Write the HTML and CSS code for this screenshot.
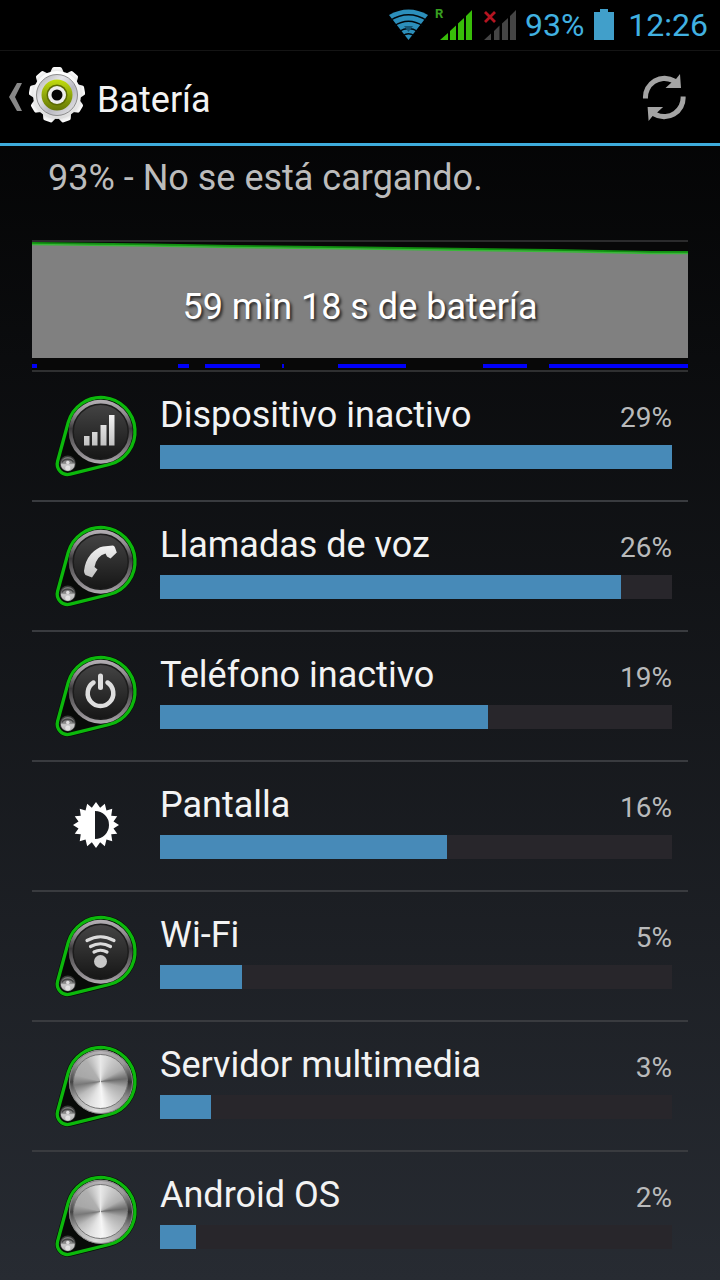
FILE: index.html
```html
<!DOCTYPE html>
<html lang="es">
<head>
<meta charset="utf-8">
<meta name="viewport" content="width=device-width, initial-scale=1">
<title>Batería</title>
<link rel="stylesheet" href="styles.css">
</head>
<body>
<svg class="defs" aria-hidden="true">
  <defs>
    <linearGradient id="ring" x1="0" y1="0" x2="0" y2="1">
      <stop offset="0" stop-color="#b4b0b4"/><stop offset=".22" stop-color="#918e91"/><stop offset=".45" stop-color="#3c3a3c"/><stop offset=".58" stop-color="#585658"/><stop offset=".85" stop-color="#8c888c"/><stop offset="1" stop-color="#b0acb0"/>
    </linearGradient>
    <linearGradient id="face" x1="0" y1="0" x2="0" y2="1">
      <stop offset="0" stop-color="#444"/><stop offset="1" stop-color="#161616"/>
    </linearGradient>
    <linearGradient id="glyph" x1="0" y1="0" x2="0" y2="1">
      <stop offset="0" stop-color="#f2f2f2"/><stop offset="1" stop-color="#c2c2c2"/>
    </linearGradient>
    <linearGradient id="screw" x1="0" y1="0" x2="0" y2="1">
      <stop offset="0" stop-color="#777"/><stop offset=".45" stop-color="#8a8a8a"/><stop offset=".55" stop-color="#ccc"/><stop offset="1" stop-color="#aaa"/>
    </linearGradient>
    <g id="knob">
      <path d="M28.2 37.5A34 34 0 1 1 69.2 79.5L30.2 89.2A10.5 10.5 0 0 1 17.6 76.2Z" fill="#080a08" stroke="#041004" stroke-width="4.500"/>
      <path d="M28.2 37.5A34 34 0 1 1 69.2 79.5L30.2 89.2A10.5 10.5 0 0 1 17.6 76.2Z" fill="#080a08" stroke="#0cb80c" stroke-width="3.300"/>
      <circle cx="60.7" cy="46.7" r="32" fill="url(#ring)"/>
      <circle cx="27.8" cy="78.4" r="8" fill="#3a3a3a"/>
      <circle cx="27.8" cy="79" r="7" fill="url(#screw)"/>
      <path d="M22 77.5a6 4.5 0 0 1 11.500 0" fill="none" stroke="#444" stroke-width="1.500"/>
      <circle cx="27.8" cy="77.5" r="1.800" fill="#ddd"/>
      <circle cx="27.8" cy="83" r="2.600" fill="#f4f4f4" opacity=".7"/>
    </g>
    <g id="dark-knob">
      <use href="#knob"/>
      <circle cx="60.7" cy="46.7" r="27.500" fill="url(#face)" stroke="#1c1c1c" stroke-width="1.500"/>
    </g>
    <linearGradient id="gear" x1="0" y1="0" x2="0" y2="1">
      <stop offset="0" stop-color="#fff"/><stop offset="1" stop-color="#dcdcdc"/>
    </linearGradient>
    <linearGradient id="silver" x1="0" y1="0" x2="1" y2="1">
      <stop offset="0" stop-color="#aaa"/><stop offset=".35" stop-color="#e6e6ea"/><stop offset=".6" stop-color="#b8b8c0"/><stop offset="1" stop-color="#eee"/>
    </linearGradient>
    <linearGradient id="lime" x1="0" y1="0" x2="0" y2="1">
      <stop offset="0" stop-color="#c3de10"/><stop offset=".5" stop-color="#90a80a"/><stop offset="1" stop-color="#657606"/>
    </linearGradient>
    <path id="tooth" d="M-7 -22L-5 -26.500Q-4.500 -28 -3 -28H3Q4.500 -28 5 -26.500L7 -22Z"/>
  </defs>
</svg>

<div class="status-bar">
  <svg class="status-wifi" viewBox="8 8 42 34" aria-label="Wi-Fi">
    <path d="M9 15Q28.500 4 48 15L28.500 40Z" fill="#2c8fbb"/>
    <path d="M10 20.500Q28.500 9 47 20.500M14 26Q28.500 16.500 43 26M19 31.500Q28.500 25.500 38 31.500M23 35.500Q28.500 32 34 35.500" fill="none" stroke="#00060a" stroke-width="1.300"/>
    <path d="M24 26h9l-4.500 6z" fill="#165574"/>
  </svg>
  <svg class="status-signal" viewBox="54 4 39 42" aria-label="Señal móvil, itinerancia">
    <text class="roaming" x="55" y="18">R</text>
    <path d="M60 40L68 33V40ZM70 31L76 25.500V40H70ZM78 23.500L84 18V40H78ZM86 16L92 10V40H86Z" fill="#38bd09"/>
  </svg>
  <svg class="status-nosignal" viewBox="104 8 32 34" aria-label="Sin señal">
    <path d="M104 40L111 33.500V40ZM114 31L119.500 25.500V40H114ZM122 23.500L128 18V40H122ZM130 16L136 10V40H130Z" fill="#454545"/>
    <path d="M105 12L115 22M115 12L105 22" stroke="#b51420" stroke-width="2.800"/>
  </svg>
  <span class="status-level">93%</span>
  <svg class="status-battery" viewBox="0 0 20 34" aria-label="Batería">
    <path d="M0 4H6V1H14V4H20V32H0Z" fill="#419fca"/>
  </svg>
  <span>12:26</span>
</div>

<header class="action-bar">
  <a class="up" href="#">
    <svg class="chevron" viewBox="0 0 14 30" aria-hidden="true"><path d="M9 1H14L7 15L14 29H9L1 15Z" fill="#888"/></svg>
    <svg class="gear" viewBox="-28 -28 56 56" aria-hidden="true">
      <g fill="url(#gear)">
        <use href="#tooth"/><use href="#tooth" transform="rotate(40)"/><use href="#tooth" transform="rotate(80)"/><use href="#tooth" transform="rotate(120)"/><use href="#tooth" transform="rotate(160)"/><use href="#tooth" transform="rotate(200)"/><use href="#tooth" transform="rotate(240)"/><use href="#tooth" transform="rotate(280)"/><use href="#tooth" transform="rotate(320)"/>
        <circle r="24"/>
      </g>
      <circle r="20.500" fill="url(#silver)" stroke="#777" stroke-width=".8"/>
      <circle r="15.500" fill="url(#lime)"/>
      <circle r="10.500" fill="#5c6c04"/>
      <circle r="9" fill="#eee"/>
      <circle r="5.500" fill="#050505"/>
    </svg>
    <h1>Batería</h1>
  </a>
  <button class="refresh" type="button" aria-label="Actualizar">
    <svg viewBox="22 14 45 49">
      <g fill="#a4a4a4">
        <path id="arrow" d="M23 39.500A21.500 21.500 0 0 1 56 20L60 15L61 29L45.500 29L51.500 23.500A16.500 16.500 0 0 0 28 39.500Z"/>
        <use href="#arrow" transform="rotate(180 44.300 38.500)"/>
      </g>
    </svg>
  </button>
</header>

<main>
  <p class="summary">93% - No se está cargando.</p>

  <section class="chart">
    <div class="graph">
      <svg class="curve" viewBox="0 0 656 116" preserveAspectRatio="none" aria-hidden="true">
        <path d="M0 2L120 3.500L330 6.500L520 8.500L656 11V116H0Z" fill="#808080"/>
        <path d="M0 1L120 2.500L200 4L330 5.500L520 8L620 10H656" fill="none" stroke="#109010" stroke-width="2"/>
        <path d="M0 2.500L120 4L200 5.500L330 7L520 9.500L620 11.500H656" fill="none" stroke="#39b739" stroke-width="1.500"/>
      </svg>
      <p class="duration">59 min 18 s de batería</p>
    </div>
    <svg class="activity" viewBox="0 0 656 12" preserveAspectRatio="none" aria-hidden="true">
      <path d="M0 8H5M146 8H157M173 8H228M250 8H252M306 8H374M451 8H495M517 8H656" stroke="#0000f8" stroke-width="4"/>
    </svg>
  </section>

  <ul class="usage">
    <li><a href="#">
      <svg class="icon" viewBox="8 3 96 96" aria-hidden="true">
        <use href="#dark-knob"/>
        <path d="M44 51H49.500V60.500H44ZM52 47H57.500V60.500H52ZM60.500 40H66.500V60.500H60.500ZM69 30H74.500V60.500H69Z" fill="url(#glyph)"/>
      </svg>
      <span class="name">Dispositivo inactivo</span><span class="percent">29%</span>
      <span class="bar"><span class="fill" style="width:100%"></span></span>
    </a></li>
    <li><a href="#">
      <svg class="icon" viewBox="8 3 96 96" aria-hidden="true">
        <use href="#dark-knob"/>
        <path d="M63 31.500L73 30.500Q74.500 31 75 32.500L76.800 37.500L70.500 43.500L67 41.500L65.500 38.500Q56.500 41 54.500 52L57.500 54.500L52 62.500L45.500 60Q44 58.500 44 56Q45 46 51 39Q57 32.500 63 31.500Z" fill="url(#glyph)"/>
      </svg>
      <span class="name">Llamadas de voz</span><span class="percent">26%</span>
      <span class="bar"><span class="fill" style="width:90%"></span></span>
    </a></li>
    <li><a href="#">
      <svg class="icon" viewBox="8 3 96 96" aria-hidden="true">
        <use href="#dark-knob"/>
        <g fill="none" stroke="#dedede" stroke-width="4.500" stroke-linecap="round">
          <path d="M53.500 37.500A12.800 12.800 0 1 0 67.500 37.500"/>
          <path d="M60.500 31V42.500" stroke-width="5"/>
        </g>
      </svg>
      <span class="name">Teléfono inactivo</span><span class="percent">19%</span>
      <span class="bar"><span class="fill" style="width:64%"></span></span>
    </a></li>
    <li><a href="#">
      <svg class="icon" viewBox="-48 -47 96 96" aria-hidden="true">
        <path d="M0 -23L4.170 -17.300L8.800 -21.250L10.460 -14.400L16.260 -16.260L15.240 -9.300L21.250 -8.800L17.500 -3.480L23 0L17.500 3.480L21.250 8.800L15.240 9.300L16.260 16.260L10.460 14.400L8.800 21.250L4.170 17.300L0 23L-4.170 17.300L-8.800 21.250L-10.460 14.400L-16.260 16.260L-15.240 9.300L-21.250 8.800L-17.500 3.480L-23 0L-17.500 -3.480L-21.250 -8.800L-15.240 -9.300L-16.260 -16.260L-10.460 -14.400L-8.800 -21.250L-4.170 -17.300ZM-1 -14V14A14 14 0 0 0 -1 -14Z" fill="#fff" fill-rule="evenodd"/>
      </svg>
      <span class="name">Pantalla</span><span class="percent">16%</span>
      <span class="bar"><span class="fill" style="width:56%"></span></span>
    </a></li>
    <li><a href="#">
      <svg class="icon" viewBox="8 3 96 96" aria-hidden="true">
        <use href="#dark-knob"/>
        <path d="M47 35.500Q60.500 28 74 35.500M50.500 41.500Q60.500 36 70.500 41.500M54 47Q60.500 43.500 67 47" fill="none" stroke="#dcdcdc" stroke-width="3.200" stroke-linecap="round"/>
        <circle cx="60.500" cy="56.500" r="6.500" fill="#c8c8c8"/>
      </svg>
      <span class="name">Wi-Fi</span><span class="percent">5%</span>
      <span class="bar"><span class="fill" style="width:16%"></span></span>
    </a></li>
    <li><a href="#">
      <svg class="icon" viewBox="8 3 96 96" aria-hidden="true">
        <use href="#knob"/>
        <foreignObject x="28.700" y="14.700" width="64" height="64"><div class="brushed outer"></div></foreignObject>
        <foreignObject x="33.200" y="19.200" width="55" height="55"><div class="brushed"></div></foreignObject>
      </svg>
      <span class="name">Servidor multimedia</span><span class="percent">3%</span>
      <span class="bar"><span class="fill" style="width:10%"></span></span>
    </a></li>
    <li><a href="#">
      <svg class="icon" viewBox="8 3 96 96" aria-hidden="true">
        <use href="#knob"/>
        <foreignObject x="28.700" y="14.700" width="64" height="64"><div class="brushed outer"></div></foreignObject>
        <foreignObject x="33.200" y="19.200" width="55" height="55"><div class="brushed"></div></foreignObject>
      </svg>
      <span class="name">Android OS</span><span class="percent">2%</span>
      <span class="bar"><span class="fill" style="width:7%"></span></span>
    </a></li>
  </ul>
</main>
</body>
</html>
```
FILE: styles.css
```css
* { box-sizing: border-box; }

body {
  margin: 0;
  min-height: 100vh;
  background: linear-gradient(#000, #272b32);
  color: #f3f3f3;
  font-family: Roboto, "Noto Sans", sans-serif;
  font-size: 36px;
  line-height: 42px;
}

p, h1, ul { margin: 0; padding: 0; }
a { color: inherit; text-decoration: none; }
svg { display: block; flex: none; }
.defs { position: absolute; width: 0; height: 0; }

.status-bar {
  display: flex;
  align-items: center;
  justify-content: flex-end;
  height: 50px;
  padding-right: 12px;
  background: #000;
  color: #41b1e1;
  font-size: 32px;
}
.status-wifi { width: 42px; height: 34px; margin-right: 4px; }
.status-signal { width: 39px; height: 42px; margin-right: 11px; }
.status-nosignal { width: 32px; height: 34px; margin-right: 9px; }
.status-battery { width: 20px; height: 34px; margin: 0 14px 0 10px; }
.roaming { fill: #38a020; font-size: 13px; font-weight: 700; }

.action-bar {
  display: flex;
  align-items: center;
  justify-content: space-between;
  height: 96px;
  padding: 0 32px 0 8px;
  background: #000;
  border-top: 1px solid #141414;
  border-bottom: 3px solid #3eacdc;
}
.up { display: flex; align-items: center; }
.chevron { width: 14px; height: 30px; margin-right: 7px; }
.gear { width: 56px; height: 56px; margin-right: 12px; margin-bottom: 4px; }
h1 { padding-top: 6px; font-size: 36px; font-weight: 400; }
.refresh { padding: 0; border: 0; background: none; }
.refresh svg { width: 45px; height: 49px; margin-right: 1px; }

.summary { padding: 11px 48px 41px; color: #bcbcbc; }

.chart {
  margin: 0 32px;
  background: #080808;
  border-top: 2px solid #2b2b2c;
  border-bottom: 2px solid #2f3031;
}
.graph { display: grid; align-items: center; }
.curve, .duration { grid-area: 1 / 1; }
.curve { width: 100%; height: 116px; }
.duration {
  padding-top: 14px;
  color: #fff;
  text-align: center;
  text-shadow: 2px 2px 3px #222;
  z-index: 1;
}
.activity { width: 100%; height: 12px; }

.usage { margin: 0 32px; list-style: none; }
.usage li + li { border-top: 2px solid #393b3f; }
.usage a {
  display: grid;
  grid-template-columns: 96px 1fr auto;
  grid-template-rows: 57px 39px;
  column-gap: 16px;
  padding: 16px;
}
.icon { grid-row: 1 / 3; width: 96px; height: 96px; }
.name { padding-top: 6px; }
.percent { padding-top: 9px; color: #b9babb; font-size: 28px; }
.bar { grid-column: 2 / 4; height: 24px; background: #28262b; }
.fill { display: block; height: 100%; background: #478ab8; }

.brushed {
  width: 100%;
  height: 100%;
  border: 1px solid #777;
  border-radius: 50%;
  background: conic-gradient(#e8e8e8, #c8c8c8 30deg, #b0b0b0 60deg, #6c6c6c 84deg, #a8a8a8 105deg, #ccc 140deg, #f6f6f6 175deg, #e0e0e0 205deg, #bcbcbc 235deg, #787878 262deg, #a8a8a8 285deg, #b0b0b0 325deg, #e8e8e8);
}
.brushed.outer {
  border-color: #888;
  background: conic-gradient(#b8b4b8, #999 50deg, #333 90deg, #888 120deg, #bbb 160deg, #ddd 190deg, #aaa 235deg, #444 270deg, #999 310deg, #b8b4b8);
}
```
